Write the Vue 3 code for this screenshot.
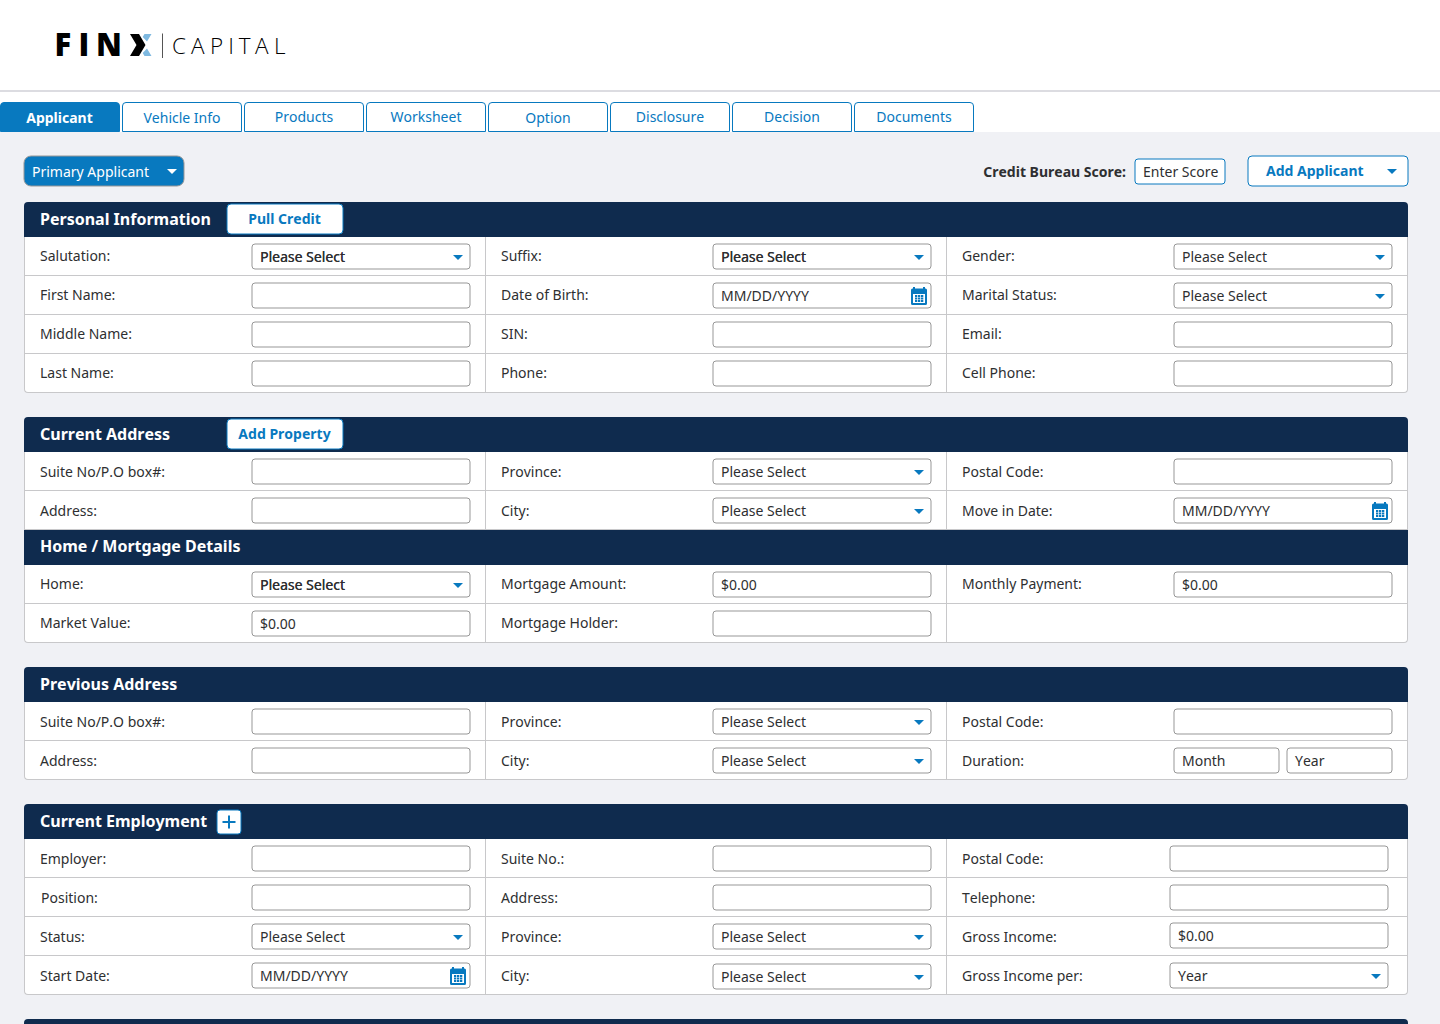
<script setup>
import { ref } from 'vue';

const tabs = [
  { name: 'Applicant', low: true },
  { name: 'Vehicle Info', low: true },
  { name: 'Products' },
  { name: 'Worksheet' },
  { name: 'Option', low: true },
  { name: 'Disclosure' },
  { name: 'Decision' },
  { name: 'Documents' },
];
const activeTab = ref('Applicant');

const text = (label, value = '', extra = '') => ({ label, boxes: [{ type: 'text', value }], extra });
const select = (label, extra = '', value = 'Please Select') => ({ label, boxes: [{ type: 'select', value }], extra });
const date = (label, extra = '') => ({ label, boxes: [{ type: 'date', value: 'MM/DD/YYYY' }], extra });

const cards = [
  [
    {
      title: 'Personal Information',
      action: 'Pull Credit',
      fields: [
        select('Salutation:', 'strong'),
        select('Suffix:', 'strong'),
        select('Gender:'),
        text('First Name:'),
        date('Date of Birth:'),
        select('Marital Status:'),
        text('Middle Name:'),
        text('SIN:'),
        text('Email:'),
        text('Last Name:'),
        text('Phone:'),
        text('Cell Phone:'),
      ],
    },
  ],
  [
    {
      title: 'Current Address',
      action: 'Add Property',
      low: true,
      fields: [
        text('Suite No/P.O box#:'),
        select('Province:'),
        text('Postal Code:'),
        text('Address:'),
        select('City:'),
        date('Move in Date:'),
      ],
    },
    {
      title: 'Home / Mortgage Details',
      fields: [
        select('Home:', 'strong'),
        text('Mortgage Amount:', '$0.00'),
        text('Monthly Payment:', '$0.00'),
        text('Market Value:', '$0.00'),
        text('Mortgage Holder:'),
        { label: '', boxes: [] },
      ],
    },
  ],
  [
    {
      title: 'Previous Address',
      low: true,
      fields: [
        text('Suite No/P.O box#:'),
        select('Province:'),
        text('Postal Code:'),
        text('Address:'),
        select('City:'),
        {
          label: 'Duration:',
          boxes: [
            { type: 'text', value: 'Month' },
            { type: 'text', value: 'Year' },
          ],
        },
      ],
    },
  ],
  [
    {
      title: 'Current Employment',
      add: true,
      low: true,
      fields: [
        text('Employer:'),
        text('Suite No.:'),
        text('Postal Code:', '', 'wide'),
        text('Position:', '', 'indent'),
        text('Address:'),
        text('Telephone:', '', 'wide'),
        select('Status:'),
        select('Province:'),
        text('Gross Income:', '$0.00', 'wide raised'),
        date('Start Date:'),
        select('City:', 'lowered'),
        select('Gross Income per:', 'wide', 'Year'),
      ],
    },
  ],
  [{ title: '', fields: [] }],
];
</script>

<template>
  <div class="page">
    <header class="top">
      <svg class="logo" width="240" height="30" viewBox="0 0 240 30">
        <text class="logo-bold" x="-1.500 22.500 40" y="26.200">FIN</text>
        <path d="M74 4h9l6.500 11-6.500 11h-9l6.500-11z" fill="#000" />
        <path d="M88.500 4h7L91 11.500 86.700 7zM88.500 26h7L91 18.500 86.700 23z" fill="#7fb9e0" />
        <path d="M106.500 3.500v24.500" stroke="#555" />
        <text class="logo-light" x="116 135 154 172.300 182.700 199 218" y="24">CAPITAL</text>
      </svg>
    </header>

    <nav class="tabs">
      <button v-for="tab in tabs" :key="tab.name" class="tab" :class="{ active: activeTab == tab.name, low: tab.low }" @click="activeTab = tab.name">
        {{ tab.name }}
      </button>
    </nav>

    <main>
      <div class="toolbar">
        <button class="primary">
          <svg class="frame"><rect rx="7" /></svg>
          <span>Primary Applicant</span>
          <svg class="caret" width="10" height="5"><path d="M0 0h10L5 5z" /></svg>
        </button>
        <div class="score">
          <span class="score-label">Credit Bureau Score:</span>
          <div class="score-box">
            <svg class="frame"><rect rx="3" /></svg>
            <span>Enter Score</span>
          </div>
        </div>
        <button class="add-applicant">
          <svg class="frame"><rect rx="4" /></svg>
          <span>Add Applicant</span>
          <svg class="caret" width="10" height="5"><path d="M0 0h10L5 5z" /></svg>
        </button>
      </div>

      <div v-for="(card, i) in cards" :key="i" class="card">
        <section v-for="group in card" :key="group.title" :class="{ low: group.low }">
          <div class="card-header">
            <h2>{{ group.title }}</h2>
            <button v-if="group.action" class="action">
              <svg class="frame"><rect rx="4" /></svg>
              <span>{{ group.action }}</span>
            </button>
            <button v-if="group.add" class="plus">
              <svg class="frame"><rect rx="3" /></svg>
              <svg class="plus-icon" width="14" height="14"><path d="M7 .5v13M.5 7h13" /></svg>
            </button>
          </div>
          <div class="grid">
            <div v-for="(field, n) in group.fields" :key="n" class="cell" :class="field.extra">
              <label>{{ field.label }}</label>
              <div class="boxes">
                <div v-for="box in field.boxes" :key="box.value" class="box">
                  <svg class="frame"><rect rx="3" /></svg>
                  <span>{{ box.value }}</span>
                  <svg v-if="box.type == 'select'" class="caret" width="10" height="5"><path d="M0 0h10L5 5z" /></svg>
                  <svg v-if="box.type == 'date'" class="calendar" width="16" height="18" viewBox="0 0 16 18">
                    <path d="M2 0h2v1.500h8V0h2v1.500h.5A1.500 1.500 0 0 1 16 3v13.500a1.500 1.500 0 0 1-1.500 1.500h-13A1.500 1.500 0 0 1 0 16.500V3a1.500 1.500 0 0 1 1.500-1.500H2z" fill="#0879bf" />
                    <path d="M2 7h12v9H2z" fill="#fff" />
                    <path d="M4 8h2.300v2H4zM7 8h2.300v2H7zM10 8h2.300v2H10zM4 10.500h2.300v2H4zM7 10.500h2.300v2H7zM10 10.500h2.300v2H10zM4 13h2.300v2H4zM7 13h2.300v2H7zM10 13h2.300v2H10z" fill="#0879bf" />
                  </svg>
                </div>
              </div>
            </div>
          </div>
        </section>
      </div>
    </main>
  </div>
</template>

<style>
body {
  margin: 0;
  background: #f0f1f5;
}
</style>

<style scoped>
.page {
  height: 1024px;
  overflow: hidden;
  background: #f0f1f5;
  color: #2e2f31;
  font: 14px/19px 'Noto Sans', sans-serif;
  font-kerning: none;
}

button {
  margin: 0;
  padding: 0;
  border: none;
  background: none;
  color: inherit;
  font: inherit;
  font-kerning: none;
  cursor: pointer;
}

.top {
  box-sizing: border-box;
  height: 92px;
  padding: 30px 0 0 56px;
  background: #fff;
  border-bottom: 2px solid #dcdce1;
}

.logo {
  display: block;
  overflow: visible;
  font-family: 'Open Sans', sans-serif;
}

.logo-bold {
  font-size: 31px;
  font-weight: 800;
}

.logo-light {
  font-size: 22.5px;
  font-weight: 300;
}

.tabs {
  display: flex;
  gap: 2px;
  height: 30px;
  padding-top: 10px;
  background: #fff;
}

.tab {
  box-sizing: border-box;
  width: 120px;
  height: 30px;
  padding: 0 0 1px;
  border: 1px solid #0879bf;
  border-radius: 4px 4px 0 0;
  color: #0879bf;
}

.tab.low {
  padding: 1px 0 0;
}

.tab.active {
  padding-right: 1px;
  background: #0879bf;
  color: #fff;
  font-weight: 700;
}

main {
  padding: 23px 32px 0 24px;
}

/* outline drawn on whole pixels, so its stroke spreads over two of them */
.frame {
  position: absolute;
  inset: 0;
  width: 100%;
  height: 100%;
}

.frame rect {
  x: 1px;
  y: 1px;
  width: calc(100% - 2px);
  height: calc(100% - 2px);
  fill: #fff;
  stroke: #979797;
}

.frame + span {
  position: relative;
}

.caret {
  position: relative;
  fill: #0879bf;
}

.toolbar {
  display: flex;
  align-items: flex-start;
  height: 47px;
  margin: 0 -1px;
}

.primary,
.add-applicant,
.score-box,
.action,
.plus,
.box {
  position: relative;
  box-sizing: border-box;
  display: flex;
  align-items: center;
}

.primary {
  justify-content: space-between;
  width: 162px;
  height: 32px;
  padding: 1px 8px 0 9px;
  color: #fff;
}

.primary .frame rect {
  fill: #0879bf;
}

.primary .caret {
  fill: #fff;
}

.score {
  display: flex;
  align-items: center;
  gap: 8px;
  height: 33px;
  margin-left: auto;
}

.score-label {
  font-weight: 700;
}

.score-box {
  width: 92px;
  height: 27px;
  padding-left: 9px;
}

.score-box .frame rect,
.add-applicant .frame rect,
.action .frame rect,
.plus .frame rect {
  stroke: #0879bf;
}

.add-applicant {
  justify-content: space-between;
  width: 162px;
  height: 32px;
  margin-left: 21px;
  padding: 0 12px 0 19px;
  color: #0879bf;
  font-weight: 700;
}

.add-applicant span {
  margin-bottom: 1px;
}

.card {
  margin-bottom: 24px;
}

.card-header {
  display: flex;
  align-items: center;
  height: 35px;
  padding-left: 16px;
  background: #0f2b4e;
  color: #fff;
}

section:first-child .card-header {
  border-radius: 4px 4px 0 0;
}

h2 {
  min-width: 186px;
  margin: 0 0 2px;
  font-size: 16px;
  line-height: 22px;
  font-weight: 700;
}

section + section h2 {
  margin-bottom: 4px;
}

.action {
  justify-content: center;
  width: 118px;
  height: 32px;
  margin-bottom: 2px;
  padding-right: 1px;
  color: #0879bf;
  font-weight: 700;
}

h2:has(+ .plus) {
  min-width: 176px;
}

.plus {
  justify-content: center;
  width: 26px;
  height: 26px;
  margin-top: 1px;
}

.plus-icon {
  position: relative;
  fill: none;
  stroke: #0879bf;
  stroke-width: 2;
}

.grid {
  display: grid;
  grid-template-columns: 461px 461px 462px;
  grid-auto-rows: 39px;
}

.cell {
  box-sizing: border-box;
  display: flex;
  justify-content: space-between;
  padding: 6px 14px 0 15px;
  background: #fff;
  border-left: 1px solid #c8c8ca;
  border-bottom: 1px solid #c8c8ca;
}

.cell:nth-child(3n) {
  border-right: 1px solid #c8c8ca;
}

section:last-child .cell:nth-last-child(3) {
  border-bottom-left-radius: 4px;
}

section:last-child .cell:last-child {
  border-bottom-right-radius: 4px;
}

label {
  padding-top: 3px;
}

.low label {
  padding-top: 4px;
}

.indent label {
  padding-left: 1px;
}

.boxes {
  display: flex;
  gap: 6px;
  width: 220px;
}

.wide .boxes {
  margin-right: 4px;
}

.raised .boxes {
  margin-top: -1px;
}

.lowered .boxes {
  margin-top: 1px;
}

.box {
  flex: 1;
  justify-content: space-between;
  height: 27px;
  padding: 1px 8px 0 9px;
}

.box span {
  margin-bottom: 2px;
}

.strong .box span {
  text-shadow: 0.2px 0 currentColor;
}

.calendar {
  position: relative;
  margin-right: -3px;
}
</style>
